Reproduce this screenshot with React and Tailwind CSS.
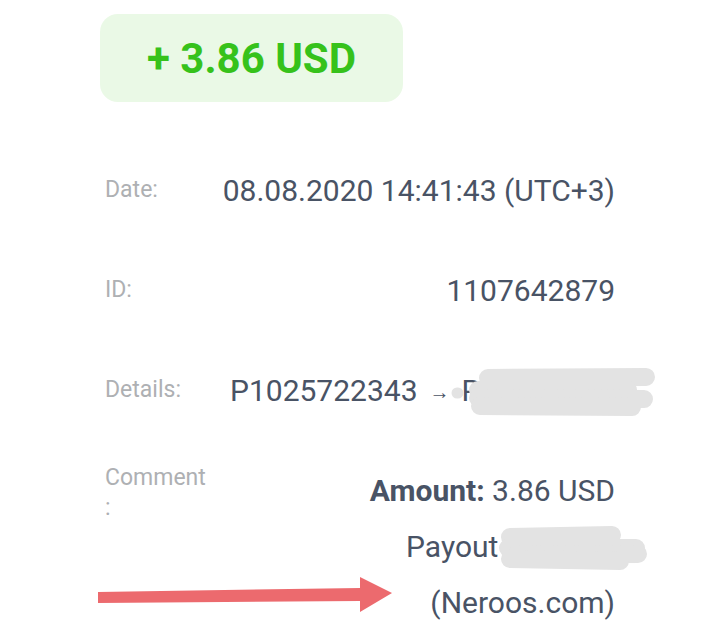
import React from "react";

const rows = [
  { label: "Date:", value: "08.08.2020 14:41:43 (UTC+3)" },
  { label: "ID:", value: "1107642879" },
];

function Blot({ className, w, h, strokes }) {
  // hand-drawn redaction scribble, coords in px
  return (
    <svg className={className} width={w} height={h} viewBox={`0 0 ${w} ${h}`} fill="none">
      {strokes.map(([d, sw], i) => (
        <path key={i} d={d} stroke="#e3e3e3" strokeWidth={sw} strokeLinecap="round" strokeLinejoin="round" />
      ))}
    </svg>
  );
}

export default function App() {
  return (
    <div className="relative w-[720px] h-[622px] overflow-hidden bg-white font-['Roboto',sans-serif]">
      <div className="pl-[100px] pr-[105px] pt-[14px]">
        {/* Amount badge */}
        <div className="w-[303px] h-[88px] rounded-[18px] bg-[#eaf9e6] flex items-center justify-center">
          <span className="text-[42px] font-bold text-[#36c21b]">+ 3.86 USD</span>
        </div>

        <div className="mt-[38px]">
          {rows.map((row) => (
            <div key={row.label} className="h-[100px] flex items-center">
              <div className="w-[120px] pl-[5px] text-[23px] text-[#aeb0b3]">{row.label}</div>
              <div className="flex-1 text-right text-[30px] text-[#495365]">{row.value}</div>
            </div>
          ))}

          {/* Details */}
          <div className="h-[100px] flex items-center">
            <div className="w-[130px] pl-[5px] text-[23px] text-[#aeb0b3]">Details:</div>
            <div className="flex-1 flex items-center text-[30px] text-[#495365] whitespace-nowrap">
              <span>P1025722343</span>
              <span className="text-[20px] mx-[12px] mt-[4px]">→</span>
              <span>P</span>
            </div>
          </div>

          {/* Comment */}
          <div className="flex pt-[23px]">
            <div className="w-[120px] pl-[5px] text-[23px] leading-[30px] text-[#aeb0b3]">
              <div>Comment</div>
              <div>:</div>
            </div>
            <div className="flex-1 text-right text-[30px] leading-[56px] text-[#495365]">
              <div>
                <span className="font-bold">Amount:</span> 3.86 USD
              </div>
              <div className="pr-[99px]">Payout r</div>
              <div>(Neroos.com)</div>
            </div>
          </div>
        </div>
      </div>

      <Blot
        className="absolute left-[450px] top-[366px]"
        w={210}
        h={54}
        strokes={[
          ["M7 27 L8 27", 11],
          ["M38 12 L196 11", 18],
          ["M28 24 L178 24", 18],
          ["M28 32 L194 33", 18],
          ["M30 40 L182 41", 18],
        ]}
      />
      <Blot
        className="absolute left-[496px] top-[524px]"
        w={156}
        h={48}
        strokes={[
          ["M14 13 L116 11", 18],
          ["M12 24 L140 24", 18],
          ["M20 31 L142 30", 18],
          ["M14 35 L124 37", 18],
        ]}
      />

      {/* red pointer arrow */}
      <svg className="absolute left-[96px] top-[570px] w-[300px] h-[50px]" viewBox="0 0 300 50">
        <path d="M2 22 L264 18 L264 7 L296 23 L264 42 L264 31 L2 33 Z" fill="#ec6a6e" />
      </svg>
    </div>
  );
}
